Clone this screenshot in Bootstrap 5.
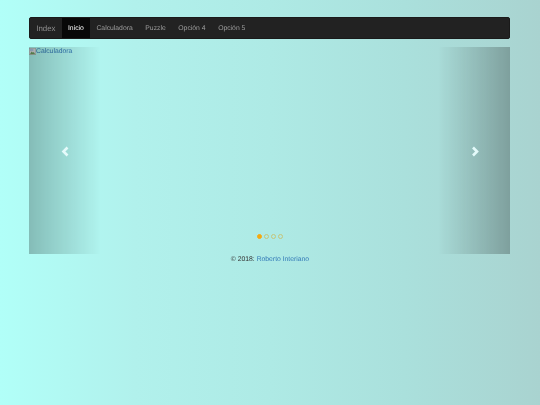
<!DOCTYPE html>
<html lang="es">
<head>
<meta charset="utf-8">
<title>Index</title>
<link rel="stylesheet" href="https://cdn.jsdelivr.net/npm/bootstrap@5.3.0/dist/css/bootstrap.min.css">
<style>
html,body{height:100%}
body{background:linear-gradient(90deg,#b1fff8 0%,#b1f1ec 25%,#aeeae5 50%,#aae0dc 75%,#a9d3d0 100%);font-family:"Liberation Sans",Arial,sans-serif;font-size:6.8px;line-height:10px;color:#333;padding:17px 30px 0 29px;text-rendering:geometricPrecision}
.page-wrap{filter:blur(.2px)}
.top-bar{height:22px;background:#222;border:1px solid #1a1a1a;border-radius:2px;padding:0;flex-wrap:nowrap;justify-content:flex-start;margin-bottom:8px}
.top-brand{font-size:7.9px;line-height:21px;color:#8f8f8f;padding:0 6.2px;text-decoration:none}
.top-link{font-size:6.8px;line-height:21px;color:#9d9d9d;padding:0 6.3px;text-decoration:none;display:block}
.top-link.is-on{color:#fff;background:#080808}
.hero{height:207px;overflow:hidden}
.hero-alt{color:#337ab7;text-decoration:none;display:flex;align-items:flex-start;line-height:7px;font-size:6.8px;padding-top:.5px}
.hero-alt svg{width:7px;height:7px;flex:none}
.hero-side{position:absolute;top:0;bottom:0;width:15%;opacity:.5}
.side-l{left:0;background:linear-gradient(to right,rgba(0,0,0,.5),rgba(0,0,0,.0001))}
.side-r{right:0;background:linear-gradient(to right,rgba(0,0,0,.0001),rgba(0,0,0,.5))}
.hero-dots{position:absolute;left:0;right:0;bottom:15px;display:flex;justify-content:center;gap:2px}
.hero-dot{width:5px;height:5px;border-radius:50%;border:1px solid #c4c47a}
.hero-dot.is-on{background:#f5a90f;border-color:#f5a90f}
.foot-line{margin:0;text-align:center;line-height:10px;padding:.5px 0 0 1px}
.foot-line a{color:#337ab7;text-decoration:none}
.chev{position:absolute;top:50%;margin-top:-5px;width:9px;height:11px;z-index:2}
.chev-prev{left:32px}
.chev-next{right:30px}
</style>
</head>
<body>
<div class="page-wrap">
<nav class="navbar top-bar d-flex align-items-stretch">
  <a class="top-brand" href="#">Index</a>
  <a class="top-link is-on" href="#">Inicio</a>
  <a class="top-link" href="#">Calculadora</a>
  <a class="top-link" href="#">Puzzle</a>
  <a class="top-link" href="#">Opción 4</a>
  <a class="top-link" href="#">Opción 5</a>
</nav>
<div class="hero position-relative">
  <a class="hero-alt" href="#"><svg viewBox="0 0 16 16"><rect x=".5" y=".5" width="15" height="15" fill="#dfe6e6" stroke="#a5a5a5"/><path d="M2 14l4-6 3 3 2-2 3 5z" fill="#6f9f5f"/><rect x="2" y="2" width="8" height="5" fill="#b5c9e6"/></svg>Calculadora</a>
  <a class="hero-side side-l" href="#" aria-label="Anterior"></a>
  <a class="hero-side side-r" href="#" aria-label="Siguiente"></a>
  <svg class="chev chev-prev" viewBox="0 0 9 11"><path d="M6.5 1.5 2.5 5.5l4 4" fill="none" stroke="#e4fafa" stroke-width="2.6"/></svg>
  <svg class="chev chev-next" viewBox="0 0 9 11"><path d="M2 1.5l4 4-4 4" fill="none" stroke="#e4fafa" stroke-width="2.6"/></svg>
  <div class="hero-dots"><span class="hero-dot is-on"></span><span class="hero-dot"></span><span class="hero-dot"></span><span class="hero-dot"></span></div>
</div>
<p class="foot-line">© 2018: <a href="#">Roberto Interiano</a></p>
</div>
<script src="https://cdn.jsdelivr.net/npm/bootstrap@5.3.0/dist/js/bootstrap.bundle.min.js"></script>
</body>
</html>
